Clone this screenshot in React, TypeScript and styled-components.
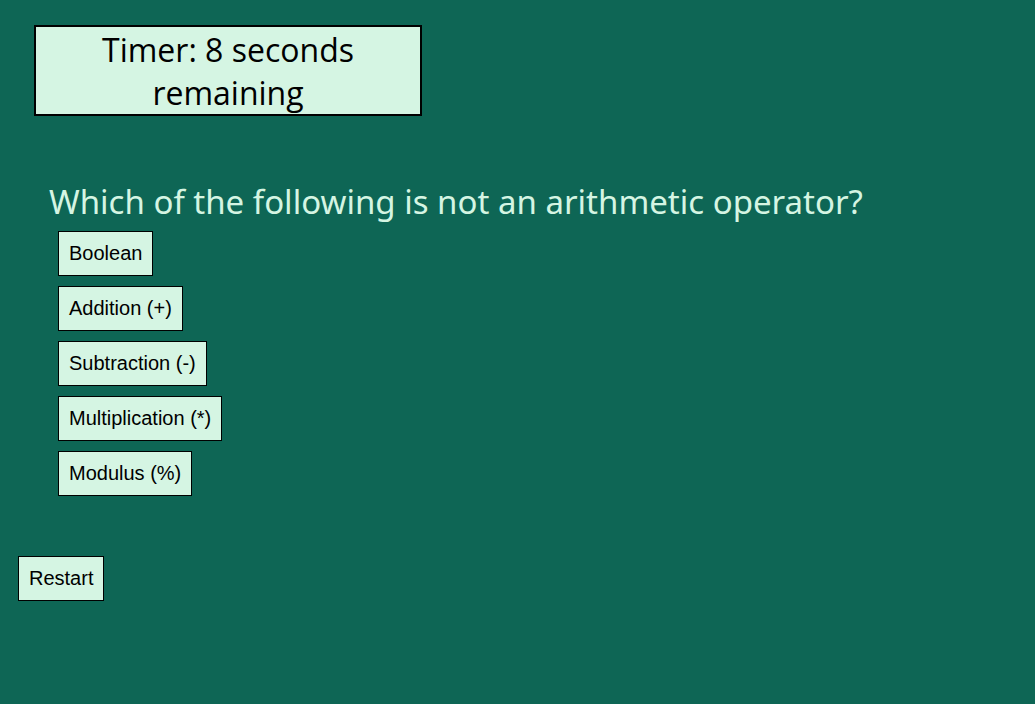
import React from "react";
import styled, { createGlobalStyle } from "styled-components";

const Global = createGlobalStyle`
  html, body { margin: 0; padding: 0; background: #0e6655; }
  body { font-family: "Liberation Sans", Arial, sans-serif; }
`;

const Page = styled.div`
  display: flex;
  flex-direction: column;
  align-items: flex-start;
  padding: 25px 0 0 18px;
`;

const Timer = styled.div`
  margin-left: 16px;
  width: 384px;
  padding-top: 1px;
  background: #d5f5e3;
  border: 2px solid #000;
  font-family: "Open Sans", sans-serif;
  font-size: 32px;
  line-height: 43px;
  text-align: center;
  color: #000;
`;

const Quiz = styled.div`
  display: flex;
  flex-direction: column;
  align-items: flex-start;
  margin: 63px 0 0 31px;
`;

const Question = styled.h2`
  margin: 0 0 6px 0;
  font-family: "Noto Sans", sans-serif;
  font-stretch: semi-condensed;
  font-weight: 400;
  font-size: 33px;
  line-height: 46px;
  color: #d5f5e3;
`;

const Options = styled.div`
  display: flex;
  flex-direction: column;
  align-items: flex-start;
  gap: 10px;
  margin-left: 9px;
`;

const Btn = styled.button`
  font-family: "Liberation Sans", Arial, sans-serif;
  font-size: 20px;
  line-height: 23px;
  padding: 10px;
  background: #d5f5e3;
  border: 1px solid #000;
  color: #000;
  cursor: pointer;
`;

const Restart = styled(Btn)`
  margin-top: 60px;
`;

const options = [
  "Boolean",
  "Addition (+)",
  "Subtraction (-)",
  "Multiplication (*)",
  "Modulus (%)",
];

export default function App() {
  return (
    <>
      <Global />
      <Page>
        <Timer>Timer: 8 seconds remaining</Timer>
        <Quiz>
          <Question>Which of the following is not an arithmetic operator?</Question>
          <Options>
            {options.map((o) => (
              <Btn key={o}>{o}</Btn>
            ))}
          </Options>
        </Quiz>
        <Restart>Restart</Restart>
      </Page>
    </>
  );
}
